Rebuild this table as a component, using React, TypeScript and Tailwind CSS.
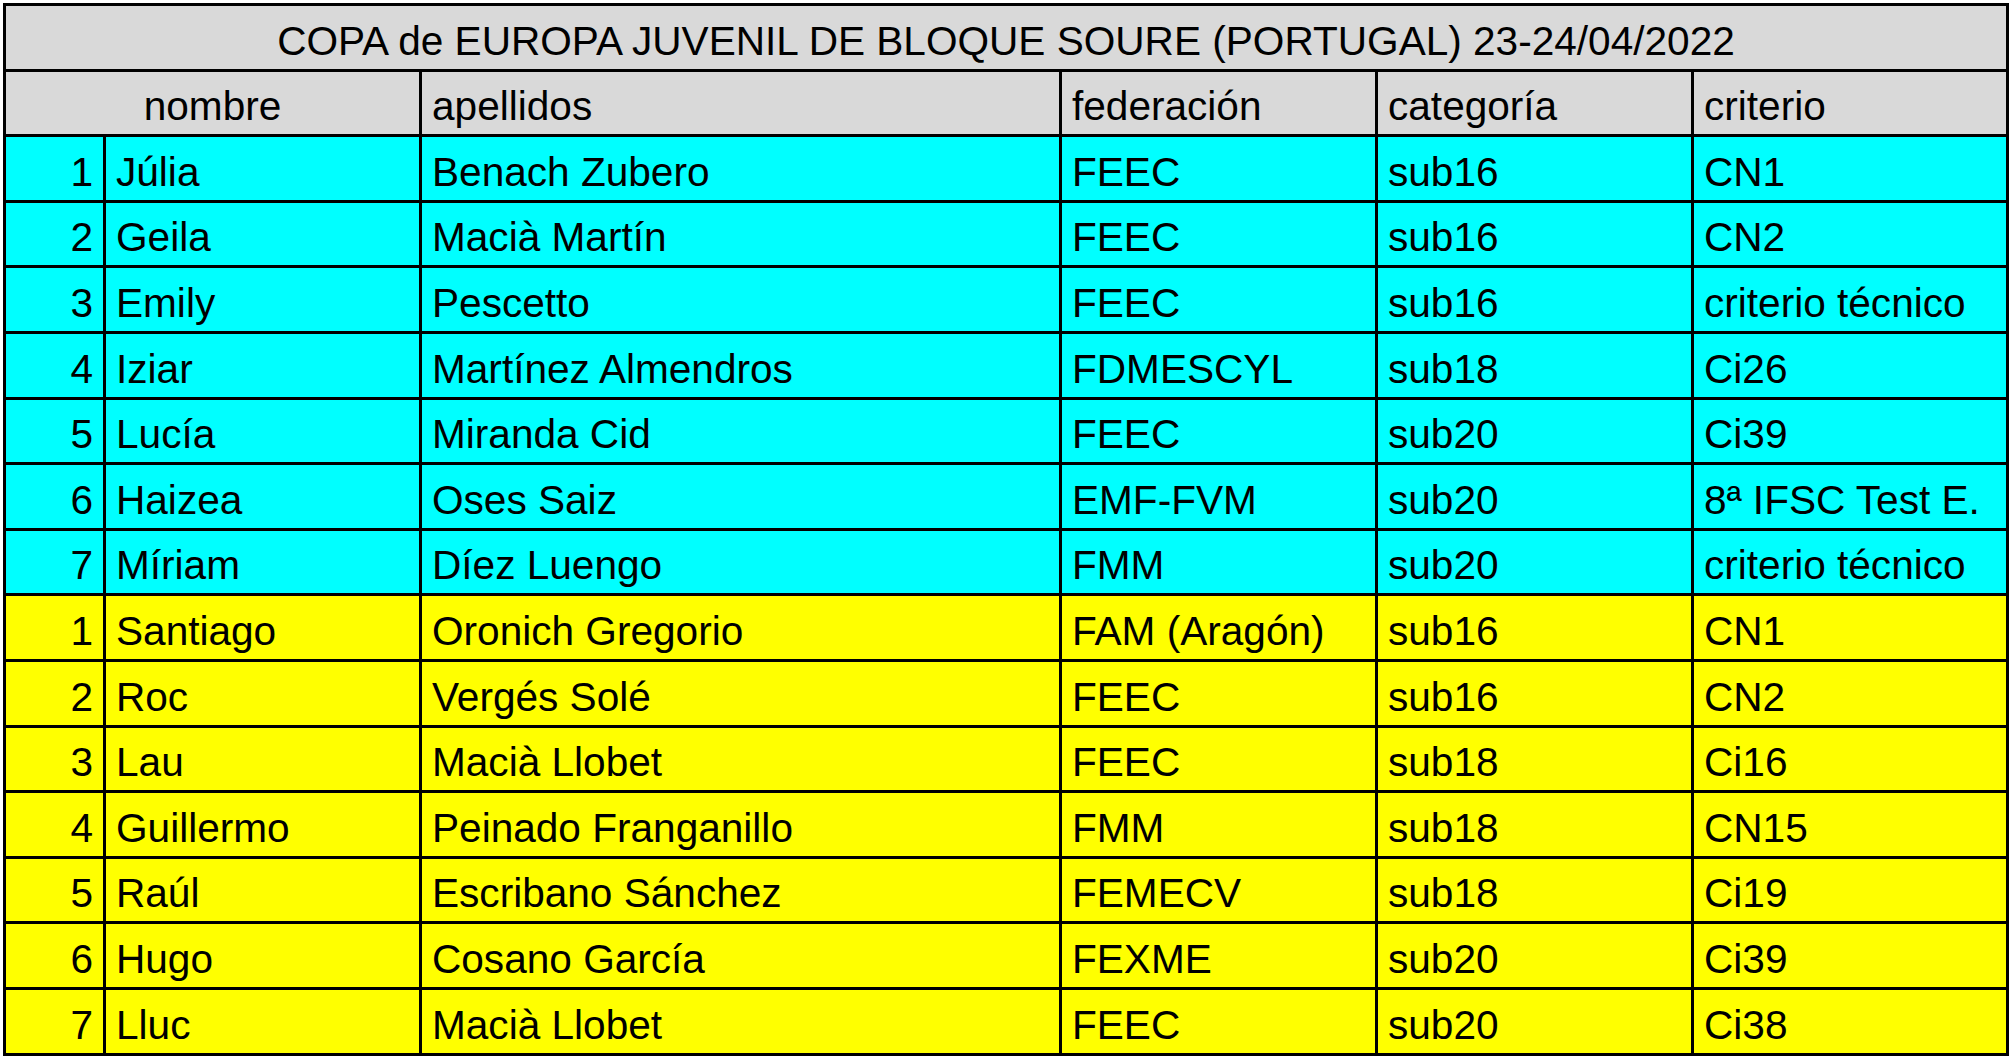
import React from 'react';

// One participant row in the list
interface Row {
  n: number;
  nombre: string;
  apellidos: string;
  federacion: string;
  categoria: string;
  criterio: string;
}

const chicas: Row[] = [
  { n: 1, nombre: 'Júlia', apellidos: 'Benach Zubero', federacion: 'FEEC', categoria: 'sub16', criterio: 'CN1' },
  { n: 2, nombre: 'Geila', apellidos: 'Macià Martín', federacion: 'FEEC', categoria: 'sub16', criterio: 'CN2' },
  { n: 3, nombre: 'Emily', apellidos: 'Pescetto', federacion: 'FEEC', categoria: 'sub16', criterio: 'criterio técnico' },
  { n: 4, nombre: 'Iziar', apellidos: 'Martínez Almendros', federacion: 'FDMESCYL', categoria: 'sub18', criterio: 'Ci26' },
  { n: 5, nombre: 'Lucía', apellidos: 'Miranda Cid', federacion: 'FEEC', categoria: 'sub20', criterio: 'Ci39' },
  { n: 6, nombre: 'Haizea', apellidos: 'Oses Saiz', federacion: 'EMF-FVM', categoria: 'sub20', criterio: '8ª IFSC Test E.' },
  { n: 7, nombre: 'Míriam', apellidos: 'Díez Luengo', federacion: 'FMM', categoria: 'sub20', criterio: 'criterio técnico' },
];

const chicos: Row[] = [
  { n: 1, nombre: 'Santiago', apellidos: 'Oronich Gregorio', federacion: 'FAM (Aragón)', categoria: 'sub16', criterio: 'CN1' },
  { n: 2, nombre: 'Roc', apellidos: 'Vergés Solé', federacion: 'FEEC', categoria: 'sub16', criterio: 'CN2' },
  { n: 3, nombre: 'Lau', apellidos: 'Macià Llobet', federacion: 'FEEC', categoria: 'sub18', criterio: 'Ci16' },
  { n: 4, nombre: 'Guillermo', apellidos: 'Peinado Franganillo', federacion: 'FMM', categoria: 'sub18', criterio: 'CN15' },
  { n: 5, nombre: 'Raúl', apellidos: 'Escribano Sánchez', federacion: 'FEMECV', categoria: 'sub18', criterio: 'Ci19' },
  { n: 6, nombre: 'Hugo', apellidos: 'Cosano García', federacion: 'FEXME', categoria: 'sub20', criterio: 'Ci39' },
  { n: 7, nombre: 'Lluc', apellidos: 'Macià Llobet', federacion: 'FEEC', categoria: 'sub20', criterio: 'Ci38' },
];

const cell = 'flex items-end pb-[5px] pl-[10px] whitespace-nowrap overflow-hidden';

const Rows = ({ rows, bg }: { rows: Row[]; bg: string }) => (
  <>
    {rows.map((r) => (
      <React.Fragment key={bg + r.n}>
        <div className={`${bg} flex items-end justify-end pb-[5px] pr-[10px]`}>{r.n}</div>
        <div className={`${bg} ${cell}`}>{r.nombre}</div>
        <div className={`${bg} ${cell}`}>{r.apellidos}</div>
        <div className={`${bg} ${cell}`}>{r.federacion}</div>
        <div className={`${bg} ${cell}`}>{r.categoria}</div>
        <div className={`${bg} ${cell}`}>{r.criterio}</div>
      </React.Fragment>
    ))}
  </>
);

const App = () => {
  return (
    <div className="min-h-screen w-full bg-white pt-[3px] pl-[3px] font-['Liberation_Sans'] text-[40.6px] leading-[46px] text-black">
      <div className="grid w-[2006px] grid-cols-[97px_313px_637px_313px_313px_1fr] auto-rows-[62.6px] gap-[3px] bg-black p-[3px]">
        <div className="col-span-6 flex items-end justify-center pb-[5px] bg-[#d9d9d9] whitespace-nowrap">
          COPA de EUROPA JUVENIL DE BLOQUE SOURE (PORTUGAL) 23-24/04/2022
        </div>

        <div className="col-span-2 flex items-end justify-center pb-[5px] bg-[#d9d9d9]">nombre</div>
        <div className={`bg-[#d9d9d9] ${cell}`}>apellidos</div>
        <div className={`bg-[#d9d9d9] ${cell}`}>federación</div>
        <div className={`bg-[#d9d9d9] ${cell}`}>categoría</div>
        <div className={`bg-[#d9d9d9] ${cell}`}>criterio</div>

        <Rows rows={chicas} bg="bg-[#00ffff]" />
        <Rows rows={chicos} bg="bg-[#ffff00]" />
      </div>
    </div>
  );
};

export default App;
